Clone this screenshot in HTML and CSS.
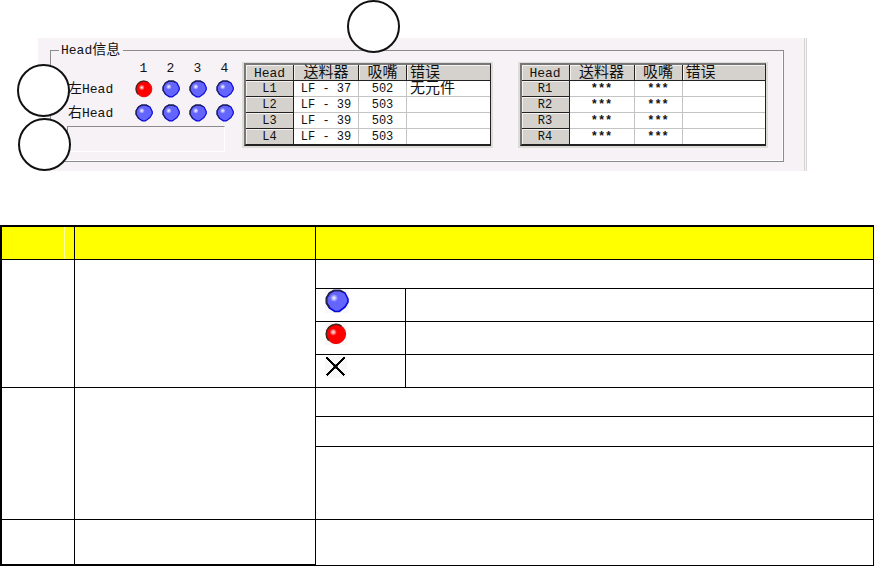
FILE: index.html
```html
<!DOCTYPE html>
<html lang="zh-CN">
<head>
<meta charset="utf-8">
<title>Head信息</title>
<link rel="stylesheet" href="styles.css">
</head>
<body>
<svg class="defs" aria-hidden="true">
  <defs>
    <radialGradient id="shine">
      <stop offset="0" stop-color="#fff"/>
      <stop offset="1" stop-color="#fff" stop-opacity="0"/>
    </radialGradient>
    <symbol id="blue" viewBox="0 0 24 24">
      <path d="M9 1.5 H15 L20 4 L23 10 V13 L20 18 L14 22.5 H10 L4.500 19 L1.500 14 V9 L4.500 4Z" fill="#6464ff" stroke="#0a0ad8" stroke-width="1.6" stroke-linejoin="round"/>
      <path d="M5 19 L1.5 14 V9 L4.5 4 L9 1.5 H15 L18 3" fill="none" stroke="#24243c" stroke-width="1.6" stroke-linejoin="round"/>
      <circle cx="9" cy="9" r="4" fill="url(#shine)"/>
    </symbol>
    <symbol id="red" viewBox="0 0 24 24">
      <circle cx="12" cy="12" r="10.5" fill="#f00" stroke="#e00000" stroke-width="1"/>
      <path d="M4 19 A10.5 10.5 0 0 1 18 3.5" fill="none" stroke="#3c2424" stroke-width="1.6"/>
      <circle cx="9" cy="10" r="4" fill="url(#shine)"/>
    </symbol>
    <symbol id="cross" viewBox="0 0 22 22">
      <path d="M1.5 1.5 L19.5 19.5 M19.5 1.5 L1.5 19.5" stroke="#000" stroke-width="1.6" shape-rendering="crispEdges"/>
      <path d="M8.5 10.5h4M10.5 8.5v4" stroke="#000" stroke-width="1.6"/>
    </symbol>
  </defs>
</svg>

<section class="panel">
  <span class="callout callout-top"></span>
  <span class="callout callout-left"></span>
  <span class="callout callout-status"></span>
  <fieldset class="group">
    <legend>Head<span class="cjk">信息</span></legend>
    <div class="content">
      <div class="heads">
        <div class="lamps">
          <span></span><span class="num">1</span><span class="num">2</span><span class="num">3</span><span class="num">4</span>
          <span class="side"><span class="cjk">左</span>Head</span>
          <svg class="lamp"><use href="#red"/></svg><svg class="lamp"><use href="#blue"/></svg><svg class="lamp"><use href="#blue"/></svg><svg class="lamp"><use href="#blue"/></svg>
          <span class="side"><span class="cjk">右</span>Head</span>
          <svg class="lamp"><use href="#blue"/></svg><svg class="lamp"><use href="#blue"/></svg><svg class="lamp"><use href="#blue"/></svg><svg class="lamp"><use href="#blue"/></svg>
        </div>
        <div class="status"></div>
      </div>
      <div class="frame">
        <table class="data">
          <colgroup><col class="c-head"><col class="c-feeder"><col class="c-nozzle"><col></colgroup>
          <thead><tr><th class="latin">Head</th><th>送料器</th><th>吸嘴</th><th class="error">错误</th></tr></thead>
          <tbody>
            <tr><th>L1</th><td>LF - 37</td><td>502</td><td class="error">无元件</td></tr>
            <tr><th>L2</th><td>LF - 39</td><td>503</td><td></td></tr>
            <tr><th>L3</th><td>LF - 39</td><td>503</td><td></td></tr>
            <tr><th>L4</th><td>LF - 39</td><td>503</td><td></td></tr>
          </tbody>
        </table>
      </div>
      <div class="frame">
        <table class="data">
          <colgroup><col class="c-head"><col class="c-feeder"><col class="c-nozzle"><col></colgroup>
          <thead><tr><th class="latin">Head</th><th>送料器</th><th>吸嘴</th><th class="error">错误</th></tr></thead>
          <tbody>
            <tr><th>R1</th><td class="stars">***</td><td class="stars">***</td><td></td></tr>
            <tr><th>R2</th><td class="stars">***</td><td class="stars">***</td><td></td></tr>
            <tr><th>R3</th><td class="stars">***</td><td class="stars">***</td><td></td></tr>
            <tr><th>R4</th><td class="stars">***</td><td class="stars">***</td><td></td></tr>
          </tbody>
        </table>
      </div>
    </div>
  </fieldset>
</section>

<table class="guide">
  <colgroup><col class="g-no"><col class="g-item"><col class="g-icon"><col></colgroup>
  <thead><tr class="h33"><th class="marked"></th><th></th><th colspan="2"></th></tr></thead>
  <tbody>
    <tr class="h29"><td rowspan="4"></td><td rowspan="4"></td><td colspan="2"></td></tr>
    <tr class="h33"><td class="icon"><svg class="lamp-large"><use href="#blue"/></svg></td><td></td></tr>
    <tr class="h33"><td class="icon"><svg class="lamp-red"><use href="#red"/></svg></td><td></td></tr>
    <tr class="h33"><td class="icon"><svg class="cross"><use href="#cross"/></svg></td><td></td></tr>
    <tr class="h29"><td rowspan="3"></td><td rowspan="3"></td><td colspan="2"></td></tr>
    <tr class="h30"><td colspan="2"></td></tr>
    <tr class="h73"><td colspan="2"></td></tr>
    <tr class="h46"><td class="thick"></td><td class="thick"></td><td colspan="2"></td></tr>
  </tbody>
</table>
</body>
</html>
```
FILE: styles.css
```css
* { box-sizing: border-box; }

body {
  margin: 0;
  background: #fff;
  color: #111;
  font: 13px/16px "Liberation Mono", "Noto Sans CJK SC", monospace;
}

.defs { position: absolute; width: 0; height: 0; }

.panel {
  position: relative;
  margin: 38px 67px 54px 38px;
  padding: 3px 20px 9px 12px;
  background: #f6f2f6;
  border-right: 3px double #d8d4d4;
}

.callout {
  position: absolute;
  width: 53px;
  height: 53px;
  border: 2px solid #111;
  border-radius: 50%;
  background: #fff;
}
.callout-top { left: 309px; top: -38px; }
.callout-left { left: -21px; top: 26px; }
.callout-status { left: -20px; top: 80px; }

.group {
  margin: 0;
  padding: 0 15px 9px 16px;
  min-width: 0;
  border: 1px solid #8c8a8c;
  box-shadow: inset -1px -1px #fff;
}
.group legend {
  margin-left: -8px;
  padding: 0 3px 0 2px;
  line-height: 18px;
}

.cjk { font-size: 14px; }

.content { display: flex; align-items: flex-start; }

.heads { width: 158px; margin-right: 17px; }

.lamps {
  display: grid;
  grid-template-columns: 63px repeat(4, 27px);
  grid-template-rows: 18px 22px 26px;
  align-items: center;
}
.num, .lamp { justify-self: center; }
.lamp { width: 18px; height: 18px; }
.side { padding-left: 1px; white-space: nowrap; }

.status {
  height: 26px;
  border: 1px solid #8c8a8c;
  border-right-color: #fff;
  border-bottom-color: #fff;
}

.frame {
  flex: 1;
  margin-top: 2px;
  border: 2px solid #dedcd6;
  border-top-width: 1px;
  background: #eeece8;
}
.frame + .frame { margin-left: 25px; }

.data {
  width: 100%;
  table-layout: fixed;
  border-collapse: separate;
  border-spacing: 0;
  border: 2px solid #777;
  border-right-color: #222;
  border-bottom-color: #222;
  border-right-width: 1px;
}
.c-head { width: 48px; }
.c-feeder { width: 65px; }
.c-nozzle { width: 48px; }

.data th, .data td {
  height: 16px;
  padding: 2px 0 0;
  background: #fff;
  border-right: 1px solid #c4c4c4;
  border-bottom: 1px solid #c4c4c4;
  font-size: 12px;
  font-weight: 400;
  line-height: 13px;
  text-align: center;
  white-space: nowrap;
}
.data th {
  background: #d5d2cd;
  border-color: #222;
  box-shadow: inset 1px 1px #f4f2ee;
}
.data thead th { font-size: 15px; }
.data thead .latin { font-size: 13px; }
.data tr > :last-child { border-right: 0; }
.data tbody tr:last-child > * { height: 15px; border-bottom: 0; }
.data .error { padding-left: 3px; font-size: 15px; text-align: left; }
.data .stars { font-weight: 700; }

.guide {
  width: 100%;
  table-layout: fixed;
  border-collapse: separate;
  border-spacing: 0;
  border: 0 solid #000;
  border-width: 2px 0 0 2px;
}
.guide th, .guide td {
  padding: 0;
  border: 0 solid #000;
  border-width: 0 1px 1px 0;
}
.guide th { background: #ff0; }
.guide .marked {
  background: linear-gradient(#ffff9c, #ffff9c) 62px 0 / 1px 100% no-repeat #ff0;
}
.guide .thick { border-bottom-width: 2px; }
.guide .icon { padding: 0 0 0 9px; vertical-align: top; }

.g-no { width: 73px; }
.g-item { width: 241px; }
.g-icon { width: 90px; }

.h29 { height: 29px; }
.h30 { height: 30px; }
.h33 { height: 33px; }
.h46 { height: 46px; }
.h73 { height: 73px; }

.lamp-large { display: block; width: 24px; height: 24px; background: #f8f8f8; }
.lamp-red, .cross { display: block; width: 22px; height: 22px; margin-top: 1px; background: #f8f8f8; }
```
